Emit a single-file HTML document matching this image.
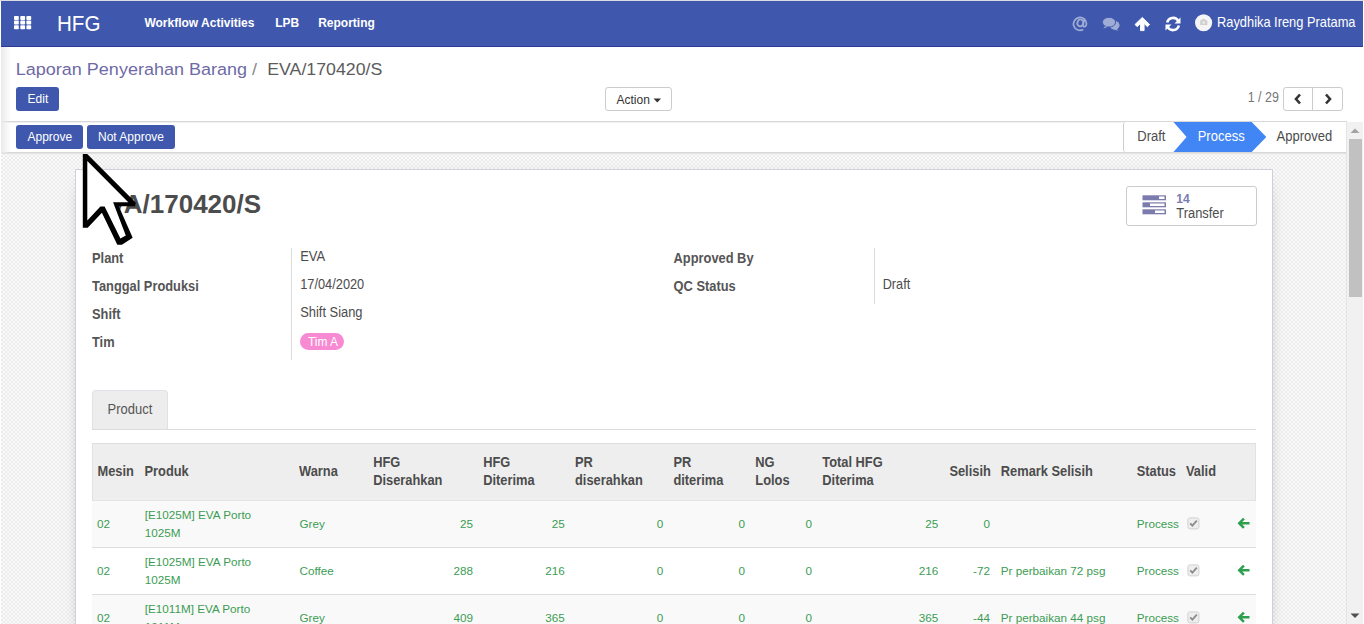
<!DOCTYPE html>
<html><head><meta charset="utf-8"><style>
html,body{margin:0;padding:0;}
body{width:1364px;height:624px;overflow:hidden;position:relative;background:#fff;font-family:"Liberation Sans",sans-serif;}
.t{position:absolute;white-space:nowrap;}
.r{position:absolute;}
</style></head><body>
<div class="r" style="left:0px;top:0px;width:1364px;height:1px;background:#dcdce2"></div>
<div class="r" style="left:1px;top:1px;width:1362px;height:45px;background:#3f58ad"></div>
<div class="r" style="left:1px;top:46px;width:1362px;height:1px;background:#2a3a98"></div>
<svg class="r" style="left:13px;top:15px" width="20" height="16" viewBox="0 0 20 16"><rect x="1" y="1" width="4.8" height="4" rx="0.8" fill="#fff"/><rect x="1" y="5.6" width="4.8" height="4" rx="0.8" fill="#fff"/><rect x="1" y="10.2" width="4.8" height="4" rx="0.8" fill="#fff"/><rect x="7.3" y="1" width="4.8" height="4" rx="0.8" fill="#fff"/><rect x="7.3" y="5.6" width="4.8" height="4" rx="0.8" fill="#fff"/><rect x="7.3" y="10.2" width="4.8" height="4" rx="0.8" fill="#fff"/><rect x="13.4" y="1" width="4.8" height="4" rx="0.8" fill="#fff"/><rect x="13.4" y="5.6" width="4.8" height="4" rx="0.8" fill="#fff"/><rect x="13.4" y="10.2" width="4.8" height="4" rx="0.8" fill="#fff"/></svg>
<div class="t" style="top:11.11px;font-size:20.6px;line-height:25px;font-weight:normal;color:#fff;transform:scaleY(1.06);transform-origin:0 19.64px;left:57px;">HFG</div>
<div class="t" style="top:16.19px;font-size:12px;line-height:14px;font-weight:bold;color:#fff;transform:scaleY(1.1);transform-origin:0 11.16px;left:144.4px;">Workflow Activities</div>
<div class="t" style="top:16.19px;font-size:12px;line-height:14px;font-weight:bold;color:#fff;transform:scaleY(1.1);transform-origin:0 11.16px;left:275.2px;">LPB</div>
<div class="t" style="top:16.19px;font-size:12px;line-height:14px;font-weight:bold;color:#fff;transform:scaleY(1.1);transform-origin:0 11.16px;left:318.2px;">Reporting</div>
<svg class="r" style="left:0;top:0" width="1364" height="47" viewBox="0 0 1364 47"><g opacity="0.5" fill="none" stroke="#fff" stroke-width="1.7">
<path d="M1083.2 29.6 A6.5 6.5 0 1 1 1086.5 23.6 C1086.5 26 1085 27 1083.8 26.6 C1082.8 26.2 1083.2 24.5 1083.6 22.5 L1084.3 19.4"/>
<ellipse cx="1080.3" cy="22.9" rx="2.9" ry="3.4" transform="rotate(20 1080.3 22.9)"/>
</g></svg>
<svg class="r" style="left:0;top:0" width="1364" height="47" viewBox="0 0 1364 47">
<g opacity="0.5">
<ellipse cx="1114.6" cy="25.2" rx="4.9" ry="4.3" fill="#fff"/><path d="M1116 28.5 L1118.6 30.8 L1113 29.3 Z" fill="#fff"/>
<ellipse cx="1109" cy="22.2" rx="6.6" ry="4.9" fill="#fff" stroke="#3f58ad" stroke-width="1"/><path d="M1105 26.2 L1103.4 28.6 L1108 26.8 Z" fill="#fff"/>
</g></svg>
<svg class="r" style="left:0;top:0" width="1364" height="47" viewBox="0 0 1364 47">
<path d="M1142.3 17.4 L1149.6 24.5 L1147.4 26.7 L1144.1 23.5 L1144.1 30.6 L1140.5 30.6 L1140.5 23.5 L1137.2 26.7 L1135 24.5 Z" fill="#fff" stroke="#fff" stroke-width="0.9" stroke-linejoin="round"/></svg>
<svg class="r" style="left:1164px;top:16px" width="18" height="16" viewBox="0 0 18 16">
<g fill="none" stroke="#fff" stroke-width="2.6">
<path d="M3.2 6.5 A6 6 0 0 1 14.3 5"/><path d="M14.8 9.5 A6 6 0 0 1 3.7 11"/>
</g>
<path d="M16.5 1.5 L16.5 7.5 L10.5 7.5 Z" fill="#fff"/>
<path d="M1.5 14.5 L1.5 8.5 L7.5 8.5 Z" fill="#fff"/>
</svg>
<svg class="r" style="left:1194px;top:14px" width="19" height="18" viewBox="0 0 19 18">
<circle cx="9.6" cy="8.75" r="8.6" fill="#f5f5f5"/>
<path d="M6.2 6.3 L7.6 6.3 L8.2 5 L11 5 L11.6 6.3 L13.3 6.3 L13.3 11 L6.2 11 Z" fill="#cfcfcf"/>
<circle cx="9.7" cy="8.6" r="1.5" fill="#e6e6e6"/>
</svg>
<div class="t" style="top:14.50px;font-size:12.85px;line-height:15px;font-weight:normal;color:#fff;transform:scaleY(1.1);transform-origin:0 11.95px;left:1217px;">Raydhika Ireng Pratama</div>
<div class="t" style="top:58.01px;font-size:18px;line-height:22px;font-weight:normal;color:#6e6aa6;transform:scaleY(0.94);transform-origin:0 17.24px;left:15.8px;">Laporan Penyerahan Barang</div>
<div class="t" style="top:58.01px;font-size:18px;line-height:22px;font-weight:normal;color:#888;transform:scaleY(0.94);transform-origin:0 17.24px;left:252px;">/</div>
<div class="t" style="top:58.60px;font-size:17.75px;line-height:21px;font-weight:normal;color:#5c5c5c;transform:scaleY(0.94);transform-origin:0 16.65px;left:267.2px;">EVA/170420/S</div>
<div class="r" style="left:16px;top:87px;width:43px;height:24px;background:#3f58ad;border-radius:3px"></div>
<div class="t" style="top:92.39px;font-size:12px;line-height:14px;font-weight:normal;color:#fff;transform:scaleY(1.1);transform-origin:0 11.16px;left:27.6px;">Edit</div>
<div class="r" style="left:605px;top:87px;width:67px;height:24px;border:1px solid #ccc;border-radius:3px;box-sizing:border-box;background:#fff"></div>
<div class="t" style="top:92.89px;font-size:12px;line-height:14px;font-weight:normal;color:#333;transform:scaleY(1.1);transform-origin:0 11.16px;left:616.5px;">Action</div>
<svg class="r" style="left:653px;top:98px" width="9" height="5" viewBox="0 0 9 5"><path d="M0.5 0.5 L8 0.5 L4.25 4.5 Z" fill="#333"/></svg>
<div class="t" style="top:90.82px;font-size:12.5px;line-height:15px;font-weight:normal;color:#777;transform:scaleY(1.1);transform-origin:0 11.83px;left:1247.7px;">1 / 29</div>
<div class="r" style="left:1283px;top:87px;width:30px;height:24px;border:1px solid #ccc;border-radius:3px 0 0 3px;box-sizing:border-box;background:#fff"></div>
<div class="r" style="left:1312px;top:87px;width:31px;height:24px;border:1px solid #ccc;border-radius:0 3px 3px 0;box-sizing:border-box;background:#fff"></div>
<svg class="r" style="left:1294px;top:93px" width="8" height="12" viewBox="0 0 8 12"><path d="M6 1.5 L2 6 L6 10.5" fill="none" stroke="#333" stroke-width="2.6"/></svg>
<svg class="r" style="left:1324px;top:93px" width="8" height="12" viewBox="0 0 8 12"><path d="M2 1.5 L6 6 L2 10.5" fill="none" stroke="#333" stroke-width="2.6"/></svg>
<div class="r" style="left:1px;top:121px;width:1346px;height:1px;background:#d8d8d8"></div>
<div class="r" style="left:16px;top:125px;width:67px;height:24px;background:#3f58ad;border-radius:3px"></div>
<div class="t" style="top:130.49px;font-size:12px;line-height:14px;font-weight:normal;color:#fff;transform:scaleY(1.1);transform-origin:0 11.16px;left:27.5px;">Approve</div>
<div class="r" style="left:87px;top:125px;width:88px;height:24px;background:#3f58ad;border-radius:3px"></div>
<div class="t" style="top:130.49px;font-size:12px;line-height:14px;font-weight:normal;color:#fff;transform:scaleY(1.1);transform-origin:0 11.16px;left:98px;">Not Approve</div>
<div class="r" style="left:1123px;top:122px;width:223px;height:30px;border-left:1px solid #ccc;border-radius:3px 0 0 3px;box-sizing:border-box;background:#fff"></div>
<div class="t" style="top:128.85px;font-size:13px;line-height:16px;font-weight:normal;color:#4c4c4c;transform:scaleY(1.1);transform-origin:0 12.50px;left:1137.3px;">Draft</div>
<svg class="r" style="left:1173px;top:122px" width="95" height="30" viewBox="0 0 95 30"><path d="M0.5 0 L78.7 0 L93.3 15 L78.7 30 L0.5 30 L13.6 15 Z" fill="#4285f4"/></svg>
<div class="t" style="top:128.85px;font-size:13px;line-height:16px;font-weight:normal;color:#fff;transform:scaleY(1.1);transform-origin:0 12.50px;left:1197.7px;">Process</div>
<div class="t" style="top:128.85px;font-size:13px;line-height:16px;font-weight:normal;color:#4c4c4c;transform:scaleY(1.1);transform-origin:0 12.50px;left:1276.5px;">Approved</div>
<div class="r" style="left:1px;top:152px;width:1346px;height:1px;background:#d8d8d8"></div>
<div class="r" style="left:1px;top:153px;width:1346px;height:471px;background:repeating-conic-gradient(#ececec 0 25%,#fafafa 0 50%) 0 0/4px 4px"></div>
<div class="r" style="left:1px;top:153px;width:1346px;height:1px;background:#e2e2e2"></div>
<div class="r" style="left:1px;top:122px;width:1122px;height:1px;background:#f0f0f0"></div>
<div class="r" style="left:1px;top:47px;width:10px;height:106px;background:linear-gradient(90deg,#eaeaea,rgba(255,255,255,0))"></div>
<div class="r" style="left:1346px;top:122px;width:17px;height:502px;background:#f1f1f1;border-left:1px solid #e4e4e4;box-sizing:border-box"></div>
<div class="r" style="left:1349px;top:139px;width:13px;height:158px;background:#c1c1c1"></div>
<svg class="r" style="left:1350px;top:128px" width="10" height="6" viewBox="0 0 10 6"><path d="M0.5 5 L9.5 5 L5 0.5 Z" fill="#a3a3a3"/></svg>
<svg class="r" style="left:1350px;top:613px" width="10" height="6" viewBox="0 0 10 6"><path d="M0.5 0.5 L9.5 0.5 L5 5 Z" fill="#505050"/></svg>
<div class="r" style="left:75px;top:169px;width:1198px;height:470px;background:#fff;border:1px solid #cfd0de;box-sizing:border-box;box-shadow:0 5px 20px -15px #000"></div>
<div class="t" style="top:188.64px;font-size:26px;line-height:31px;font-weight:bold;color:#4c4c4c;left:91px;">EVA/170420/S</div>
<div class="r" style="left:1126px;top:186px;width:131px;height:40px;border:1px solid #ccc;border-radius:3px;box-sizing:border-box;background:#fff"></div>
<svg class="r" style="left:1142px;top:195px" width="25" height="20" viewBox="0 0 25 20">
<rect x="0.5" y="0.3" width="23.5" height="5" fill="#7c7bad"/><rect x="17" y="1.5" width="5.5" height="2.5" fill="#fff"/>
<rect x="0.5" y="7.3" width="23.5" height="5" fill="#7c7bad"/><rect x="8" y="8.5" width="14.5" height="2.5" fill="#fff"/>
<rect x="0.5" y="14.3" width="23.5" height="5" fill="#7c7bad"/><rect x="13" y="15.5" width="9.5" height="2.5" fill="#fff"/>
</svg>
<div class="t" style="top:192.49px;font-size:12px;line-height:14px;font-weight:bold;color:#7c7bad;transform:scaleY(1.1);transform-origin:0 11.16px;left:1176.3px;">14</div>
<div class="t" style="top:206.28px;font-size:12.9px;line-height:15px;font-weight:normal;color:#4c4c4c;transform:scaleY(1.1);transform-origin:0 11.97px;left:1176.3px;">Transfer</div>
<div class="t" style="top:251.00px;font-size:12.85px;line-height:15px;font-weight:bold;color:#555;transform:scaleY(1.1);transform-origin:0 11.95px;left:92px;">Plant</div>
<div class="t" style="top:279.00px;font-size:12.85px;line-height:15px;font-weight:bold;color:#555;transform:scaleY(1.1);transform-origin:0 11.95px;left:92px;">Tanggal Produksi</div>
<div class="t" style="top:307.00px;font-size:12.85px;line-height:15px;font-weight:bold;color:#555;transform:scaleY(1.1);transform-origin:0 11.95px;left:92px;">Shift</div>
<div class="t" style="top:335.00px;font-size:12.85px;line-height:15px;font-weight:bold;color:#555;transform:scaleY(1.1);transform-origin:0 11.95px;left:92px;">Tim</div>
<div class="r" style="left:291px;top:248px;width:1px;height:112px;background:#dcdcdc"></div>
<div class="t" style="top:248.95px;font-size:13px;line-height:16px;font-weight:normal;color:#4c4c4c;transform:scaleY(1.1);transform-origin:0 12.50px;left:300.2px;">EVA</div>
<div class="t" style="top:277.01px;font-size:12.8px;line-height:15px;font-weight:normal;color:#4c4c4c;transform:scaleY(1.1);transform-origin:0 11.94px;left:300.2px;">17/04/2020</div>
<div class="t" style="top:304.98px;font-size:12.9px;line-height:15px;font-weight:normal;color:#4c4c4c;transform:scaleY(1.1);transform-origin:0 11.97px;left:300.2px;">Shift Siang</div>
<div class="r" style="left:300px;top:333px;width:44px;height:17px;background:#f78ad2;border-radius:9px"></div>
<div class="t" style="top:334.79px;font-size:12px;line-height:14px;font-weight:normal;color:#fff;transform:scaleY(1.1);transform-origin:0 11.16px;left:307.9px;">Tim A</div>
<div class="t" style="top:251.00px;font-size:12.85px;line-height:15px;font-weight:bold;color:#555;transform:scaleY(1.1);transform-origin:0 11.95px;left:673.6px;">Approved By</div>
<div class="t" style="top:279.00px;font-size:12.85px;line-height:15px;font-weight:bold;color:#555;transform:scaleY(1.1);transform-origin:0 11.95px;left:673.6px;">QC Status</div>
<div class="r" style="left:874px;top:248px;width:1px;height:56px;background:#dcdcdc"></div>
<div class="t" style="top:277.55px;font-size:12.7px;line-height:15px;font-weight:normal;color:#4c4c4c;transform:scaleY(1.1);transform-origin:0 11.90px;left:882.7px;">Draft</div>
<div class="r" style="left:92px;top:390px;width:76px;height:40px;background:#ededed;border:1px solid #e0e0e8;border-bottom:none;border-radius:4px 4px 0 0;box-sizing:border-box"></div>
<div class="t" style="top:401.95px;font-size:13px;line-height:16px;font-weight:normal;color:#555;transform:scaleY(1.1);transform-origin:0 12.50px;left:107.6px;">Product</div>
<div class="r" style="left:92px;top:429px;width:1164px;height:1px;background:#dddddd"></div>
<div class="r" style="left:92px;top:443px;width:1164px;height:58px;background:#eeeeee;border-top:1px solid #dedede;border-left:1px solid #e2e2e2;border-right:1px solid #e2e2e2;border-bottom:1px solid #e4e4e4;box-sizing:border-box"></div>
<div class="t" style="top:464.00px;font-size:12.85px;line-height:15px;font-weight:bold;color:#4c4c4c;transform:scaleY(1.1);transform-origin:0 11.95px;left:97.5px;">Mesin</div>
<div class="t" style="top:464.00px;font-size:12.85px;line-height:15px;font-weight:bold;color:#4c4c4c;transform:scaleY(1.1);transform-origin:0 11.95px;left:144.5px;">Produk</div>
<div class="t" style="top:464.00px;font-size:12.85px;line-height:15px;font-weight:bold;color:#4c4c4c;transform:scaleY(1.1);transform-origin:0 11.95px;left:299px;">Warna</div>
<div class="t" style="top:464.00px;font-size:12.85px;line-height:15px;font-weight:bold;color:#4c4c4c;transform:scaleY(1.1);transform-origin:0 11.95px;left:949.4px;">Selisih</div>
<div class="t" style="top:464.00px;font-size:12.85px;line-height:15px;font-weight:bold;color:#4c4c4c;transform:scaleY(1.1);transform-origin:0 11.95px;left:1000.8px;">Remark Selisih</div>
<div class="t" style="top:464.00px;font-size:12.85px;line-height:15px;font-weight:bold;color:#4c4c4c;transform:scaleY(1.1);transform-origin:0 11.95px;left:1136.7px;">Status</div>
<div class="t" style="top:464.00px;font-size:12.85px;line-height:15px;font-weight:bold;color:#4c4c4c;transform:scaleY(1.1);transform-origin:0 11.95px;left:1186px;">Valid</div>
<div class="t" style="top:455.20px;font-size:12.85px;line-height:15px;font-weight:bold;color:#4c4c4c;transform:scaleY(1.1);transform-origin:0 11.95px;left:373.2px;">HFG</div>
<div class="t" style="top:473.10px;font-size:12.85px;line-height:15px;font-weight:bold;color:#4c4c4c;transform:scaleY(1.1);transform-origin:0 11.95px;left:373.2px;">Diserahkan</div>
<div class="t" style="top:455.20px;font-size:12.85px;line-height:15px;font-weight:bold;color:#4c4c4c;transform:scaleY(1.1);transform-origin:0 11.95px;left:483.2px;">HFG</div>
<div class="t" style="top:473.10px;font-size:12.85px;line-height:15px;font-weight:bold;color:#4c4c4c;transform:scaleY(1.1);transform-origin:0 11.95px;left:483.2px;">Diterima</div>
<div class="t" style="top:455.20px;font-size:12.85px;line-height:15px;font-weight:bold;color:#4c4c4c;transform:scaleY(1.1);transform-origin:0 11.95px;left:575px;">PR</div>
<div class="t" style="top:473.10px;font-size:12.85px;line-height:15px;font-weight:bold;color:#4c4c4c;transform:scaleY(1.1);transform-origin:0 11.95px;left:575px;">diserahkan</div>
<div class="t" style="top:455.20px;font-size:12.85px;line-height:15px;font-weight:bold;color:#4c4c4c;transform:scaleY(1.1);transform-origin:0 11.95px;left:673.4px;">PR</div>
<div class="t" style="top:473.10px;font-size:12.85px;line-height:15px;font-weight:bold;color:#4c4c4c;transform:scaleY(1.1);transform-origin:0 11.95px;left:673.4px;">diterima</div>
<div class="t" style="top:455.20px;font-size:12.85px;line-height:15px;font-weight:bold;color:#4c4c4c;transform:scaleY(1.1);transform-origin:0 11.95px;left:755.3px;">NG</div>
<div class="t" style="top:473.10px;font-size:12.85px;line-height:15px;font-weight:bold;color:#4c4c4c;transform:scaleY(1.1);transform-origin:0 11.95px;left:755.3px;">Lolos</div>
<div class="t" style="top:455.20px;font-size:12.85px;line-height:15px;font-weight:bold;color:#4c4c4c;transform:scaleY(1.1);transform-origin:0 11.95px;left:822.3px;">Total HFG</div>
<div class="t" style="top:473.10px;font-size:12.85px;line-height:15px;font-weight:bold;color:#4c4c4c;transform:scaleY(1.1);transform-origin:0 11.95px;left:822.3px;">Diterima</div>
<div class="r" style="left:92px;top:501px;width:1164px;height:47px;background:#f9f9f9;"></div>
<div class="t" style="top:516.50px;font-size:11.7px;line-height:14px;font-weight:normal;color:#3b9d53;left:96.9px;">02</div>
<div class="t" style="top:508.00px;font-size:11.7px;line-height:14px;font-weight:normal;color:#3b9d53;left:144.8px;">[E1025M] EVA Porto</div>
<div class="t" style="top:525.50px;font-size:11.7px;line-height:14px;font-weight:normal;color:#3b9d53;left:144.8px;">1025M</div>
<div class="t" style="top:516.50px;font-size:11.7px;line-height:14px;font-weight:normal;color:#3b9d53;left:299.5px;">Grey</div>
<div class="t" style="top:516.50px;font-size:11.7px;line-height:14px;font-weight:normal;color:#3b9d53;right:890.9px;text-align:right;">25</div>
<div class="t" style="top:516.50px;font-size:11.7px;line-height:14px;font-weight:normal;color:#3b9d53;right:799.3px;text-align:right;">25</div>
<div class="t" style="top:516.50px;font-size:11.7px;line-height:14px;font-weight:normal;color:#3b9d53;right:700.7px;text-align:right;">0</div>
<div class="t" style="top:516.50px;font-size:11.7px;line-height:14px;font-weight:normal;color:#3b9d53;right:619px;text-align:right;">0</div>
<div class="t" style="top:516.50px;font-size:11.7px;line-height:14px;font-weight:normal;color:#3b9d53;right:552px;text-align:right;">0</div>
<div class="t" style="top:516.50px;font-size:11.7px;line-height:14px;font-weight:normal;color:#3b9d53;right:425.79999999999995px;text-align:right;">25</div>
<div class="t" style="top:516.50px;font-size:11.7px;line-height:14px;font-weight:normal;color:#3b9d53;right:374px;text-align:right;">0</div>
<div class="t" style="top:516.50px;font-size:11.7px;line-height:14px;font-weight:normal;color:#3b9d53;left:1136.7px;">Process</div>
<svg class="r" style="left:1187px;top:516.6px" width="13" height="13" viewBox="0 0 13 13"><rect x="0.9" y="0.9" width="11" height="11" rx="2" fill="#eeeeee" stroke="#d2d2d2"/><path d="M3.2 6.3 L5.4 8.6 L9.8 3.6" fill="none" stroke="#8c8c8c" stroke-width="1.8"/></svg>
<svg class="r" style="left:1237px;top:516.6px" width="13" height="12" viewBox="0 0 13 12"><path d="M6 0.8 L7.8 2.6 L5.2 5 L12.5 5 L12.5 7.5 L5.2 7.5 L7.8 9.9 L6 11.7 L0.5 6.25 Z" fill="#2e9e4f"/></svg>
<div class="r" style="left:92px;top:547px;width:1164px;height:47px;background:#fff;border-top:1px solid #dddddd;box-sizing:border-box"></div>
<div class="t" style="top:563.50px;font-size:11.7px;line-height:14px;font-weight:normal;color:#3b9d53;left:96.9px;">02</div>
<div class="t" style="top:555.00px;font-size:11.7px;line-height:14px;font-weight:normal;color:#3b9d53;left:144.8px;">[E1025M] EVA Porto</div>
<div class="t" style="top:572.50px;font-size:11.7px;line-height:14px;font-weight:normal;color:#3b9d53;left:144.8px;">1025M</div>
<div class="t" style="top:563.50px;font-size:11.7px;line-height:14px;font-weight:normal;color:#3b9d53;left:299.5px;">Coffee</div>
<div class="t" style="top:563.50px;font-size:11.7px;line-height:14px;font-weight:normal;color:#3b9d53;right:890.9px;text-align:right;">288</div>
<div class="t" style="top:563.50px;font-size:11.7px;line-height:14px;font-weight:normal;color:#3b9d53;right:799.3px;text-align:right;">216</div>
<div class="t" style="top:563.50px;font-size:11.7px;line-height:14px;font-weight:normal;color:#3b9d53;right:700.7px;text-align:right;">0</div>
<div class="t" style="top:563.50px;font-size:11.7px;line-height:14px;font-weight:normal;color:#3b9d53;right:619px;text-align:right;">0</div>
<div class="t" style="top:563.50px;font-size:11.7px;line-height:14px;font-weight:normal;color:#3b9d53;right:552px;text-align:right;">0</div>
<div class="t" style="top:563.50px;font-size:11.7px;line-height:14px;font-weight:normal;color:#3b9d53;right:425.79999999999995px;text-align:right;">216</div>
<div class="t" style="top:563.50px;font-size:11.7px;line-height:14px;font-weight:normal;color:#3b9d53;right:374px;text-align:right;">-72</div>
<div class="t" style="top:563.50px;font-size:11.7px;line-height:14px;font-weight:normal;color:#3b9d53;left:1000.8px;">Pr perbaikan 72 psg</div>
<div class="t" style="top:563.50px;font-size:11.7px;line-height:14px;font-weight:normal;color:#3b9d53;left:1136.7px;">Process</div>
<svg class="r" style="left:1187px;top:563.6px" width="13" height="13" viewBox="0 0 13 13"><rect x="0.9" y="0.9" width="11" height="11" rx="2" fill="#eeeeee" stroke="#d2d2d2"/><path d="M3.2 6.3 L5.4 8.6 L9.8 3.6" fill="none" stroke="#8c8c8c" stroke-width="1.8"/></svg>
<svg class="r" style="left:1237px;top:563.6px" width="13" height="12" viewBox="0 0 13 12"><path d="M6 0.8 L7.8 2.6 L5.2 5 L12.5 5 L12.5 7.5 L5.2 7.5 L7.8 9.9 L6 11.7 L0.5 6.25 Z" fill="#2e9e4f"/></svg>
<div class="r" style="left:92px;top:594px;width:1164px;height:47px;background:#f9f9f9;border-top:1px solid #dddddd;box-sizing:border-box"></div>
<div class="t" style="top:610.50px;font-size:11.7px;line-height:14px;font-weight:normal;color:#3b9d53;left:96.9px;">02</div>
<div class="t" style="top:602.00px;font-size:11.7px;line-height:14px;font-weight:normal;color:#3b9d53;left:144.8px;">[E1011M] EVA Porto</div>
<div class="t" style="top:619.50px;font-size:11.7px;line-height:14px;font-weight:normal;color:#3b9d53;left:144.8px;">1011M</div>
<div class="t" style="top:610.50px;font-size:11.7px;line-height:14px;font-weight:normal;color:#3b9d53;left:299.5px;">Grey</div>
<div class="t" style="top:610.50px;font-size:11.7px;line-height:14px;font-weight:normal;color:#3b9d53;right:890.9px;text-align:right;">409</div>
<div class="t" style="top:610.50px;font-size:11.7px;line-height:14px;font-weight:normal;color:#3b9d53;right:799.3px;text-align:right;">365</div>
<div class="t" style="top:610.50px;font-size:11.7px;line-height:14px;font-weight:normal;color:#3b9d53;right:700.7px;text-align:right;">0</div>
<div class="t" style="top:610.50px;font-size:11.7px;line-height:14px;font-weight:normal;color:#3b9d53;right:619px;text-align:right;">0</div>
<div class="t" style="top:610.50px;font-size:11.7px;line-height:14px;font-weight:normal;color:#3b9d53;right:552px;text-align:right;">0</div>
<div class="t" style="top:610.50px;font-size:11.7px;line-height:14px;font-weight:normal;color:#3b9d53;right:425.79999999999995px;text-align:right;">365</div>
<div class="t" style="top:610.50px;font-size:11.7px;line-height:14px;font-weight:normal;color:#3b9d53;right:374px;text-align:right;">-44</div>
<div class="t" style="top:610.50px;font-size:11.7px;line-height:14px;font-weight:normal;color:#3b9d53;left:1000.8px;">Pr perbaikan 44 psg</div>
<div class="t" style="top:610.50px;font-size:11.7px;line-height:14px;font-weight:normal;color:#3b9d53;left:1136.7px;">Process</div>
<svg class="r" style="left:1187px;top:610.6px" width="13" height="13" viewBox="0 0 13 13"><rect x="0.9" y="0.9" width="11" height="11" rx="2" fill="#eeeeee" stroke="#d2d2d2"/><path d="M3.2 6.3 L5.4 8.6 L9.8 3.6" fill="none" stroke="#8c8c8c" stroke-width="1.8"/></svg>
<svg class="r" style="left:1237px;top:610.6px" width="13" height="12" viewBox="0 0 13 12"><path d="M6 0.8 L7.8 2.6 L5.2 5 L12.5 5 L12.5 7.5 L5.2 7.5 L7.8 9.9 L6 11.7 L0.5 6.25 Z" fill="#2e9e4f"/></svg>
<svg class="r" style="left:0;top:0" width="200" height="260" viewBox="0 0 200 260">
<path d="M82.8 154 L87.2 154 L135.6 202.4 L135.6 206.2 L118.8 206.2 L132.7 237.7 L121.9 244.8 L117.3 244.8 L101.9 212.7 L87.7 227.8 L82.8 227.8 Z" fill="#000"/>
<path d="M87.3 161 L87.3 220.5 L100.4 206.5 L104.6 206.5 L120.4 238.5 L125.8 235.4 L113.1 202.3 L128.3 202.3 Z" fill="#fff"/>
</svg>
</body></html>
